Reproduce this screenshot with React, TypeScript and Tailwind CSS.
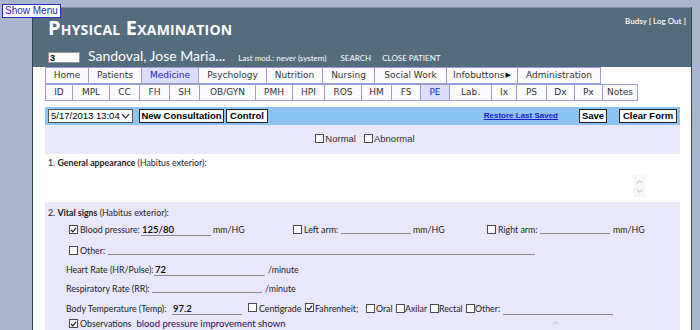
import React from 'react';

const mainTabs = [
  { label: 'Home', w: 44 },
  { label: 'Patients', w: 53 },
  { label: 'Medicine', w: 57, active: true },
  { label: 'Psychology', w: 68 },
  { label: 'Nutrition', w: 56 },
  { label: 'Nursing', w: 52 },
  { label: 'Social Work', w: 72 },
  { label: 'Infobuttons', w: 71, arrow: true },
  { label: 'Administration', w: 83 },
];

const subTabs = [
  { label: 'ID', w: 28 },
  { label: 'MPL', w: 37 },
  { label: 'CC', w: 30 },
  { label: 'FH', w: 30 },
  { label: 'SH', w: 30 },
  { label: 'OB/GYN', w: 56 },
  { label: 'PMH', w: 37 },
  { label: 'HPI', w: 32 },
  { label: 'ROS', w: 37 },
  { label: 'HM', w: 30 },
  { label: 'FS', w: 29 },
  { label: 'PE', w: 29, active: true },
  { label: 'Lab.', w: 42 },
  { label: 'Ix', w: 25 },
  { label: 'PS', w: 30 },
  { label: 'Dx', w: 28 },
  { label: 'Px', w: 28 },
  { label: 'Notes', w: 35 },
];

function Box({ checked }: { checked?: boolean }) {
  return (
    <span className="inline-flex items-center justify-center w-[9px] h-[9px] border border-[#4a4a4a] bg-white shrink-0">
      {checked && (
        <svg viewBox="0 0 10 10" className="w-[8px] h-[8px]">
          <path d="M1.5 5 L4 7.6 L8.6 2" stroke="#1a1a1a" strokeWidth="1.7" fill="none" />
        </svg>
      )}
    </span>
  );
}

function Line({ w, children }: { w: number; children?: React.ReactNode }) {
  return (
    <span
      className="inline-block shrink-0 border-b border-[#8a8a8a] h-[12px] leading-[11px] text-black font-semibold text-[9.5px] pl-[1px]"
      style={{ width: w }}
    >
      {children}
    </span>
  );
}

function Label({ w, children, className }: { w: number; children: React.ReactNode; className?: string }) {
  return (
    <span className={'inline-block shrink-0 ' + (className ?? '')} style={{ width: w }}>
      {children}
    </span>
  );
}

function Tab({ label, w, active, arrow }: { label: string; w: number; active?: boolean; arrow?: boolean }) {
  return (
    <div
      className={
        'h-[17px] border-y border-r first:border-l border-[#9c9cd6] flex items-center justify-center text-[9px] ' +
        (active ? 'bg-[#dcdcfc] text-[#2424c8]' : 'bg-[#fbfbff] text-[#333]')
      }
      style={{ width: w }}
    >
      {label}
      {arrow && <span className="text-[7px] ml-[1px] text-black">▶</span>}
    </div>
  );
}

export default function App() {
  return (
    <div className="relative h-[330px] overflow-hidden bg-[#a9b6ce] pt-[7px] pl-[32px] pr-[8px]">
      <button className="absolute left-[2px] top-[4px] h-[14px] px-[2px] bg-white border border-[#2a2ac0] text-[#1c1cc8] text-[10px] leading-[12px] font-['Liberation_Sans',sans-serif] z-10">
        Show Menu
      </button>

      <div className="h-full border-x border-[#34454f] bg-white font-['DejaVu_Sans',sans-serif]">
        <div className="h-[60px] bg-[#546d7e] border-t border-[#7e93a1] px-[15px] flex flex-col text-white">
          <div className="flex justify-between items-start pt-[8px]">
            <h1 className="font-['Open_Sans',sans-serif] font-bold text-[20px] leading-[24px] [font-variant:small-caps] tracking-[0.2px]">
              Physical Examination
            </h1>
            <div className="font-['Lato',sans-serif] text-[8px] leading-[10px] font-semibold -mr-[10px]">Budsy [ Log Out ]</div>
          </div>
          <div className="mt-auto pb-[3px] flex items-end font-['Lato',sans-serif]">
            <div className="w-[32px] h-[11px] bg-white text-black text-[9px] leading-[10px] pl-[1px] mb-[1px] font-['Liberation_Sans',sans-serif] font-bold border border-[#999]">3</div>
            <span className="ml-[8px] text-[14px] leading-[16px]">Sandoval, Jose Maria...</span>
            <span className="ml-[13px] text-[8px] leading-[12px]">Last mod.: never (system)</span>
            <span className="ml-[14px] text-[8px] leading-[12px]">SEARCH</span>
            <span className="ml-[11px] text-[8px] leading-[12px]">CLOSE PATIENT</span>
          </div>
        </div>

        <div className="pl-[12px] pr-[11px]">
          <div className="flex">
            {mainTabs.map((t) => (
              <Tab key={t.label} {...t} />
            ))}
          </div>
          <div className="flex">
            {subTabs.map((t) => (
              <Tab key={t.label} {...t} />
            ))}
          </div>

          <div className="mt-[6px] h-[18px] bg-[#8ec4f4] flex items-center px-[3px] font-['Liberation_Sans',sans-serif] text-[9.5px] text-black whitespace-nowrap">
            <div className="w-[85px] h-[14px] bg-white border border-[#555] flex items-center justify-between px-[2px]">
              <span>5/17/2013 13:04</span>
              <svg viewBox="0 0 10 6" className="w-[9px] h-[6px]">
                <path d="M1 1 L5 5 L9 1" stroke="#222" strokeWidth="1.3" fill="none" />
              </svg>
            </div>
            <button className="ml-[6px] h-[14px] w-[85px] bg-white border border-[#222] font-bold text-[9.5px] leading-[12px]">New Consultation</button>
            <button className="ml-[2px] h-[14px] w-[42px] bg-white border border-[#222] font-bold text-[9.5px] leading-[12px]">Control</button>
            <a className="ml-auto text-[#1a1ad0] underline font-bold text-[8px]">Restore Last Saved</a>
            <button className="ml-[21px] h-[14px] w-[28px] bg-white border border-[#222] font-bold text-[9.5px] leading-[12px]">Save</button>
            <button className="ml-[12px] h-[14px] w-[58px] bg-white border border-[#222] font-bold text-[9.5px] leading-[12px]">Clear Form</button>
          </div>

          <div className="h-[29px] bg-[#e8e8fa] flex items-end justify-center pb-[8px] gap-[8px] font-['Liberation_Sans',sans-serif] text-[9.5px] text-[#333] pl-[5px]">
            <label className="flex items-center gap-[1px]"><Box />Normal</label>
            <label className="flex items-center gap-[1px]"><Box />Abnormal</label>
          </div>

          <div className="h-[48px] bg-white font-['Lato',sans-serif] text-[8.8px] leading-[12px] text-[#222] pl-[3px] pt-[3px] relative">
            <div>
              1. <b>General appearance</b> (Habitus exterior):
            </div>
            <div className="absolute left-[589px] top-[21px] w-[11px] h-[22px] bg-[#f7f7f7] flex flex-col items-center justify-center gap-[5px]">
              <svg viewBox="0 0 8 5" className="w-[7px] h-[4px]"><path d="M1 4 L4 1 L7 4" stroke="#aaa" strokeWidth="1" fill="none" /></svg>
              <svg viewBox="0 0 8 5" className="w-[7px] h-[4px]"><path d="M1 1 L4 4 L7 1" stroke="#aaa" strokeWidth="1" fill="none" /></svg>
            </div>
          </div>

          <div className="h-[200px] bg-[#e8e8fa] font-['Lato',sans-serif] text-[8.8px] leading-[12px] text-[#222] pl-[3px] pt-[5px] whitespace-nowrap">
            <div>
              2. <b>Vital signs</b> (Habitus exterior):
            </div>
            <div className="flex items-center h-[13px] mt-[4px] pl-[21px]">
              <div className="w-[224px] flex items-center">
                <Box checked />
                <Label w={58} className="ml-[2px]">Blood pressure:</Label>
                <span className="ml-[3px]"><Line w={70}>125/80</Line></span>
                <span className="ml-[2px]">mm/HG</span>
              </div>
              <div className="w-[194px] flex items-center">
                <Box />
                <Label w={34} className="ml-[2px]">Left arm:</Label>
                <span className="ml-[3px]"><Line w={70} /></span>
                <span className="ml-[2px]">mm/HG</span>
              </div>
              <div className="flex items-center">
                <Box />
                <Label w={39} className="ml-[2px]">Right arm:</Label>
                <span className="ml-[3px]"><Line w={70} /></span>
                <span className="ml-[3px]">mm/HG</span>
              </div>
            </div>
            <div className="flex items-center h-[13px] mt-[8px] pl-[21px]">
              <Box />
              <Label w={25} className="ml-[2px]">Other:</Label>
              <span className="ml-[3px]"><Line w={427} /></span>
            </div>
            <div className="flex items-center h-[13px] mt-[6px] pl-[18px]">
              <Label w={86}>Heart Rate (HR/Pulse):</Label>
              <span className="ml-[2px]"><Line w={111}>72</Line></span>
              <span className="ml-[3px]">/minute</span>
            </div>
            <div className="flex items-center h-[13px] mt-[6px] pl-[18px]">
              <Label w={84}>Respiratory Rate (RR):</Label>
              <span className="ml-[2px]"><Line w={110} /></span>
              <span className="ml-[3px]">/minute</span>
            </div>
            <div className="flex items-center h-[13px] mt-[7px] pl-[18px]">
              <Label w={104}>Body Temperature (Temp):</Label>
              <span className="ml-[2px]"><Line w={70}>97.2</Line></span>
              <span className="ml-[6px]"><Box /></span>
              <Label w={44} className="ml-[2px]">Centigrade</Label>
              <span className="ml-[2px]"><Box checked /></span>
              <Label w={51} className="ml-[1px]">Fahrenheit;</Label>
              <Box />
              <Label w={20} className="ml-[1px]">Oral</Label>
              <Box />
              <Label w={25}>Axilar</Label>
              <Box />
              <Label w={27}>Rectal</Label>
              <Box />
              <Label w={28}>Other:</Label>
              <Line w={110} />
            </div>
            <div className="flex items-center h-[13px] mt-[2px] pl-[21px] relative">
              <Box checked />
              <span className="ml-[2px]">Observations</span>
              <span className="ml-[5px] text-[#2a0860] text-[9.5px]">blood pressure improvement shown</span>
              <svg viewBox="0 0 8 5" className="absolute left-[504px] top-[4px] w-[7px] h-[4px]"><path d="M1 4 L4 1 L7 4" stroke="#aaa" strokeWidth="1" fill="none" /></svg>
            </div>
          </div>
        </div>
      </div>
    </div>
  );
}
